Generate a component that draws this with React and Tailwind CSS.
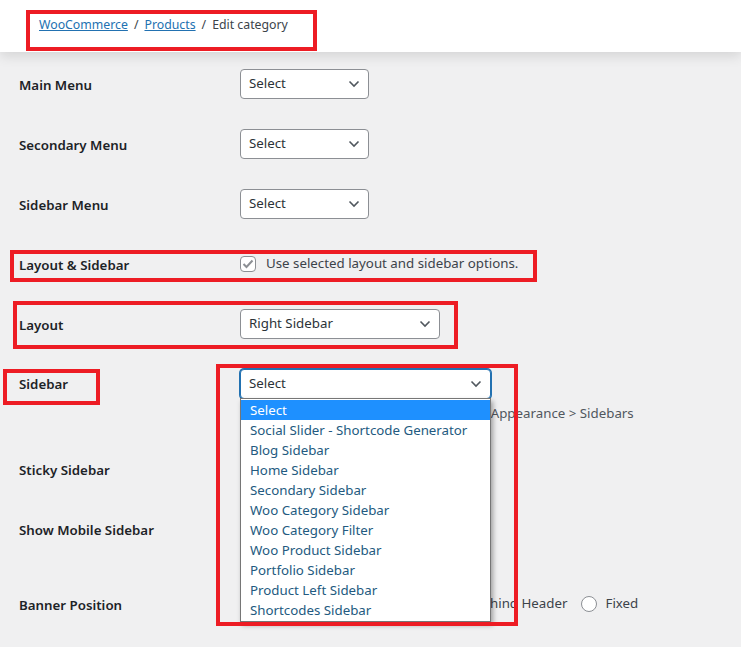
import React from "react";

const font = { fontFamily: '"Segoe UI", "Noto Sans", sans-serif' };

const Chevron = ({ className = "" }) => (
  <svg width="12" height="8" viewBox="0 0 12 8" className={className}>
    <path d="M1.5 1.5 L6 6 L10.5 1.5" fill="none" stroke="#50575e" strokeWidth="1.6" />
  </svg>
);

const Select = ({ value = "Select", width = "w-[129px]", focus = false }) => (
  <div
    className={`${width} h-[30px] flex items-center justify-between pl-2 pr-2 bg-white rounded-[4px] border text-[13.3px] text-[#2c3338] ${
      focus ? "border-[#2271b1] shadow-[0_0_0_1px_#2271b1]" : "border-[#8c8f94]"
    }`}
  >
    <span>{value}</span>
    <Chevron />
  </div>
);

const Radio = ({ label }) => (
  <label className="flex items-center gap-2 text-[13.3px] text-[#3c434a]">
    <span className="w-4 h-4 rounded-full border border-[#8c8f94] bg-white" />
    {label}
  </label>
);

const Row = ({ label, h = "h-[60px]", children }) => (
  <div className={`flex items-center ${h}`}>
    <div className="w-[240px] pl-[19px] pt-[3px] text-[13.3px] font-semibold text-[#1d2327]">{label}</div>
    <div className="flex-1">{children}</div>
  </div>
);

const options = [
  "Select",
  "Social Slider - Shortcode Generator",
  "Blog Sidebar",
  "Home Sidebar",
  "Secondary Sidebar",
  "Woo Category Sidebar",
  "Woo Category Filter",
  "Woo Product Sidebar",
  "Portfolio Sidebar",
  "Product Left Sidebar",
  "Shortcodes Sidebar",
];

export default function App() {
  return (
    <div className="relative w-[741px] h-[647px] overflow-hidden bg-[#f0f0f1]" style={font}>
      <header className="relative z-10 h-[52px] bg-white shadow-[0_4px_12px_rgba(0,0,0,0.12)] pl-[39px] pt-[16px] text-[12.3px] text-[#3c434a]">
        <a className="text-[#2271b1] underline">WooCommerce</a>
        <span className="mx-[6px]">/</span>
        <a className="text-[#2271b1] underline">Products</a>
        <span className="mx-[6px]">/</span>
        <span>Edit category</span>
      </header>

      <div className="pt-[2px]">
        <Row label="Main Menu">
          <Select />
        </Row>
        <Row label="Secondary Menu">
          <Select />
        </Row>
        <Row label="Sidebar Menu">
          <Select />
        </Row>
        <Row label="Layout & Sidebar">
          <label className="flex items-center gap-[10px] text-[13.3px] text-[#3c434a]">
            <span className="w-4 h-4 rounded-[4px] border border-[#8c8f94] bg-white flex items-center justify-center">
              <svg width="12" height="10" viewBox="0 0 12 10">
                <path d="M1.5 5 L4.5 8 L10.5 1.5" fill="none" stroke="#8c8f94" strokeWidth="2" />
              </svg>
            </span>
            Use selected layout and sidebar options.
          </label>
        </Row>
        <Row label="Layout">
          <Select value="Right Sidebar" width="w-[200px]" />
        </Row>
        <div className="flex h-[85px] pt-[15px]">
          <div className="w-[240px] pl-[19px] pt-[6px] text-[13.3px] font-semibold text-[#1d2327]">Sidebar</div>
          <div className="flex-1">
            <Select width="w-[251px]" focus />
            <p className="mt-[5px] text-[13.3px] text-[#50575e] whitespace-nowrap">
              Choose a sidebar for this category from Appearance &gt; Sidebars
            </p>
          </div>
        </div>
        <Row label="Sticky Sidebar">
          <div className="flex gap-4">
            <Radio label="Yes" />
            <Radio label="No" />
          </div>
        </Row>
        <Row label="Show Mobile Sidebar">
          <div className="flex gap-4">
            <Radio label="Yes" />
            <Radio label="No" />
          </div>
        </Row>
        <Row label="Banner Position" h="h-[90px]">
          <div className="flex gap-[14px]">
            <Radio label="Default" />
            <Radio label="Above Header" />
            <Radio label="Behind Header" />
            <Radio label="Fixed" />
          </div>
        </Row>
      </div>

      {/* open dropdown list */}
      <ul className="absolute left-[240px] top-[398px] w-[251px] bg-white border border-[#767676] shadow-[2px_3px_5px_rgba(0,0,0,0.35)] py-[1px] text-[13.3px] text-[#235a80] z-20">
        {options.map((o, i) => (
          <li
            key={o}
            className={`h-[20px] leading-[20px] pl-[9px] ${i === 0 ? "bg-[#1e90ff] text-white" : ""}`}
          >
            {o}
          </li>
        ))}
      </ul>

      {/* annotation boxes */}
      <div className="absolute left-[26px] top-[10px] w-[291px] h-[41px] border-4 border-[#ed1c24] z-30" />
      <div className="absolute left-[10px] top-[250px] w-[527px] h-[32px] border-4 border-[#ed1c24] z-30" />
      <div className="absolute left-[13px] top-[301px] w-[445px] h-[48px] border-4 border-[#ed1c24] z-30" />
      <div className="absolute left-[3px] top-[369px] w-[97px] h-[36px] border-4 border-[#ed1c24] z-30" />
      <div className="absolute left-[216px] top-[364px] w-[302px] h-[262px] border-4 border-[#ed1c24] z-30" />
    </div>
  );
}
